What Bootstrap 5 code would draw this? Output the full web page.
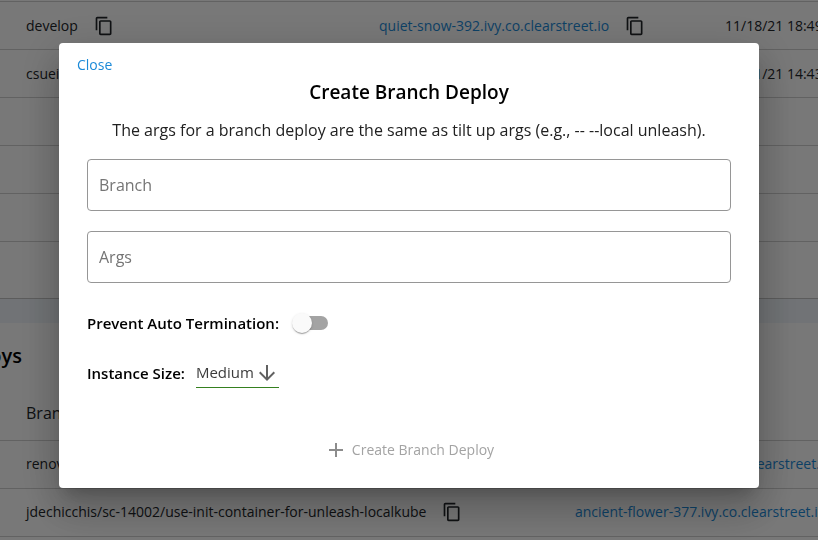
<!DOCTYPE html>
<html lang="en">
<head>
<meta charset="utf-8">
<meta name="viewport" content="width=device-width, initial-scale=1">
<title>Branch Deploys</title>
<link rel="stylesheet" href="https://cdn.jsdelivr.net/npm/bootstrap@5.3.0/dist/css/bootstrap.min.css">
<style>
body { font-family: "Open Sans", sans-serif; font-size: 14px; line-height: 20px; background: #f2f7fb; color: #212121; }
.page-area { padding-top: 1px; background: #fff; }
.page-gap { height: 24px; background: #f0f5fa; }
.deploy-list { width: 1100px; table-layout: fixed; margin: 0; white-space: nowrap; }
.deploy-list td, .deploy-list th { height: 48px; padding: 0 26px; vertical-align: middle; border: 0; border-bottom: 1px solid #d0d0d0; background: #fff; color: inherit; }
.deploy-list th { height: 54px; font-size: 16px; font-weight: 400; }
.deploy-list td + td, .deploy-list th + th { padding-left: 0; }
.first-list { border-top: 1px solid #d0d0d0; }
.list-footer { height: 57px; border-bottom: 1px solid #c4c4c4; }
.list-title { width: 22px; margin: 19px 0 16px; font-size: 20px; line-height: 28px; font-weight: 600; color: #000; }
.site-link { color: #1b8ad8; text-decoration: none; font-weight: 500; }
.icon-copy { width: 20px; height: 20px; }
.icon-button { border: 0; padding: 0; background: none; color: inherit; line-height: 1; }
.modal-backdrop { --bs-backdrop-opacity: .53; }
.deploy-dialog { max-width: 700px; margin: 43px auto; }
.deploy-dialog .modal-content { border: 0; border-radius: 4px; color: #000; box-shadow: 0 11px 15px -7px rgba(0,0,0,.2), 0 24px 38px 3px rgba(0,0,0,.14), 0 9px 46px 8px rgba(0,0,0,.12); }
.close-link { margin: 12px 18px 0; padding: 0; border: 0; font-size: 14px; line-height: 20px; color: #1b8ad8; }
.dialog-title { font-size: 19px; line-height: 28px; font-weight: 600; margin: 3px 0 0; }
.dialog-form { padding: 0 28px 20px; }
.dialog-text { font-size: 16px; line-height: 24px; margin: 12px 0 17px; color: #212121; }
.text-entry { height: 52px; padding: 0 11px; border: 1px solid #969696; border-radius: 4px; font-size: 16px; margin-bottom: 20px; }
.text-entry::placeholder { color: #757575; }
.field-name { font-size: 15px; line-height: 24px; font-weight: 600; }
.toggle-row { margin-top: 28px; }
.deploy-toggle { appearance: none; position: relative; width: 34px; height: 14px; margin: 0 0 0 15px; border-radius: 7px; background: #a3a3a3; }
.deploy-toggle::before { content: ""; position: absolute; left: -2px; top: -3px; width: 20px; height: 20px; border-radius: 50%; background: #fafafa; box-shadow: 0 2px 1px -1px rgba(0,0,0,.2), 0 1px 1px rgba(0,0,0,.14), 0 1px 3px rgba(0,0,0,.12); }
.deploy-toggle:checked::before { left: 16px; }
.size-row { margin-top: 22px; }
.size-picker { border-bottom: 1px solid #35801f; margin-left: 11px; }
.size-picker select { appearance: none; width: 83px; height: 30px; border: 0; padding: 0; background: transparent; font-size: 15px; color: #3c3c3c; }
.size-picker svg { width: 24px; height: 24px; color: #616161; pointer-events: none; }
.create-button { margin-top: 44px; padding: 6px 8px; border: 0; font-size: 14px; line-height: 20px; }
.create-button:disabled { color: #a3a3a3; opacity: 1; border: 0; }
.create-button svg { width: 24px; height: 24px; color: #8c8c8c; }
</style>
</head>
<body class="overflow-hidden">
<svg class="d-none" aria-hidden="true">
  <symbol id="copy" viewBox="0 0 24 24"><path fill="currentColor" d="M16 1H4c-1.1 0-2 .9-2 2v14h2V3h12V1zm3 4H8c-1.1 0-2 .9-2 2v14c0 1.1.9 2 2 2h11c1.1 0 2-.9 2-2V7c0-1.1-.9-2-2-2zm0 16H8V7h11v14z"/></symbol>
</svg>
<main class="overflow-hidden vh-100 page-area">
  <section class="overflow-hidden">
    <table class="table deploy-list first-list">
      <colgroup><col width="379"><col width="346"><col></colgroup>
      <tbody>
        <tr>
          <td><div class="d-flex align-items-center gap-3">develop <button class="icon-button" aria-label="Copy branch"><svg class="icon-copy"><use href="#copy"/></svg></button></div></td>
          <td><div class="d-flex align-items-center gap-3"><a class="site-link" href="#">quiet-snow-392.ivy.co.clearstreet.io</a> <button class="icon-button" aria-label="Copy link"><svg class="icon-copy"><use href="#copy"/></svg></button></div></td>
          <td>11/18/21 18:49</td>
        </tr>
        <tr><td>csueiras</td><td></td><td>11/11/21 14:43</td></tr>
        <tr><td></td><td></td><td></td></tr>
        <tr><td></td><td></td><td></td></tr>
        <tr><td></td><td></td><td></td></tr>
      </tbody>
    </table>
    <div class="list-footer"></div>
  </section>
  <div class="page-gap"></div>
  <section class="overflow-hidden">
    <div class="d-flex justify-content-end overflow-hidden list-title">Deploys</div>
    <table class="table deploy-list">
      <colgroup><col width="575"><col></colgroup>
      <thead><tr><th>Branch</th><th></th></tr></thead>
      <tbody>
        <tr><td>renovate</td><td><a class="site-link" href="#">patient-meadow-12.ivy.co.clearstreet.io</a></td></tr>
        <tr>
          <td><div class="d-flex align-items-center gap-3">jdechicchis/sc-14002/use-init-container-for-unleash-localkube <button class="icon-button" aria-label="Copy branch"><svg class="icon-copy"><use href="#copy"/></svg></button></div></td>
          <td><a class="site-link" href="#">ancient-flower-377.ivy.co.clearstreet.io</a></td>
        </tr>
        <tr><td></td><td></td></tr>
      </tbody>
    </table>
  </section>
</main>

<div class="modal-backdrop show"></div>
<div class="modal d-block" role="dialog" aria-modal="true" aria-labelledby="dialog-title">
  <div class="modal-dialog deploy-dialog">
    <div class="modal-content">
      <button type="button" class="btn close-link align-self-start">Close</button>
      <h2 class="dialog-title text-center" id="dialog-title">Create Branch Deploy</h2>
      <form class="dialog-form">
        <p class="dialog-text text-center">The args for a branch deploy are the same as tilt up args (e.g., -- --local unleash).</p>
        <input class="form-control text-entry" type="text" placeholder="Branch" aria-label="Branch">
        <input class="form-control text-entry" type="text" placeholder="Args" aria-label="Args">
        <div class="d-flex align-items-center toggle-row">
          <label class="field-name" for="keep">Prevent Auto Termination:</label>
          <input class="deploy-toggle" type="checkbox" role="switch" id="keep">
        </div>
        <div class="d-flex align-items-center size-row">
          <label class="field-name" for="size">Instance Size:</label>
          <div class="size-picker position-relative d-flex">
            <select id="size"><option>Small</option><option selected>Medium</option><option>Large</option></select>
            <svg class="position-absolute end-0 top-0 mt-1" viewBox="0 0 24 24" aria-hidden="true"><path fill="currentColor" d="M20 12l-1.41-1.41L13 16.17V4h-2v12.17l-5.58-5.59L4 12l8 8 8-8z"/></svg>
          </div>
        </div>
        <div class="text-center">
          <button type="submit" class="btn create-button d-inline-flex align-items-center gap-1" disabled><svg viewBox="0 0 24 24" aria-hidden="true"><path fill="currentColor" d="M19 13h-6v6h-2v-6H5v-2h6V5h2v6h6v2z"/></svg>Create Branch Deploy</button>
        </div>
      </form>
    </div>
  </div>
</div>
<script src="https://cdn.jsdelivr.net/npm/bootstrap@5.3.0/dist/js/bootstrap.bundle.min.js"></script>
</body>
</html>
